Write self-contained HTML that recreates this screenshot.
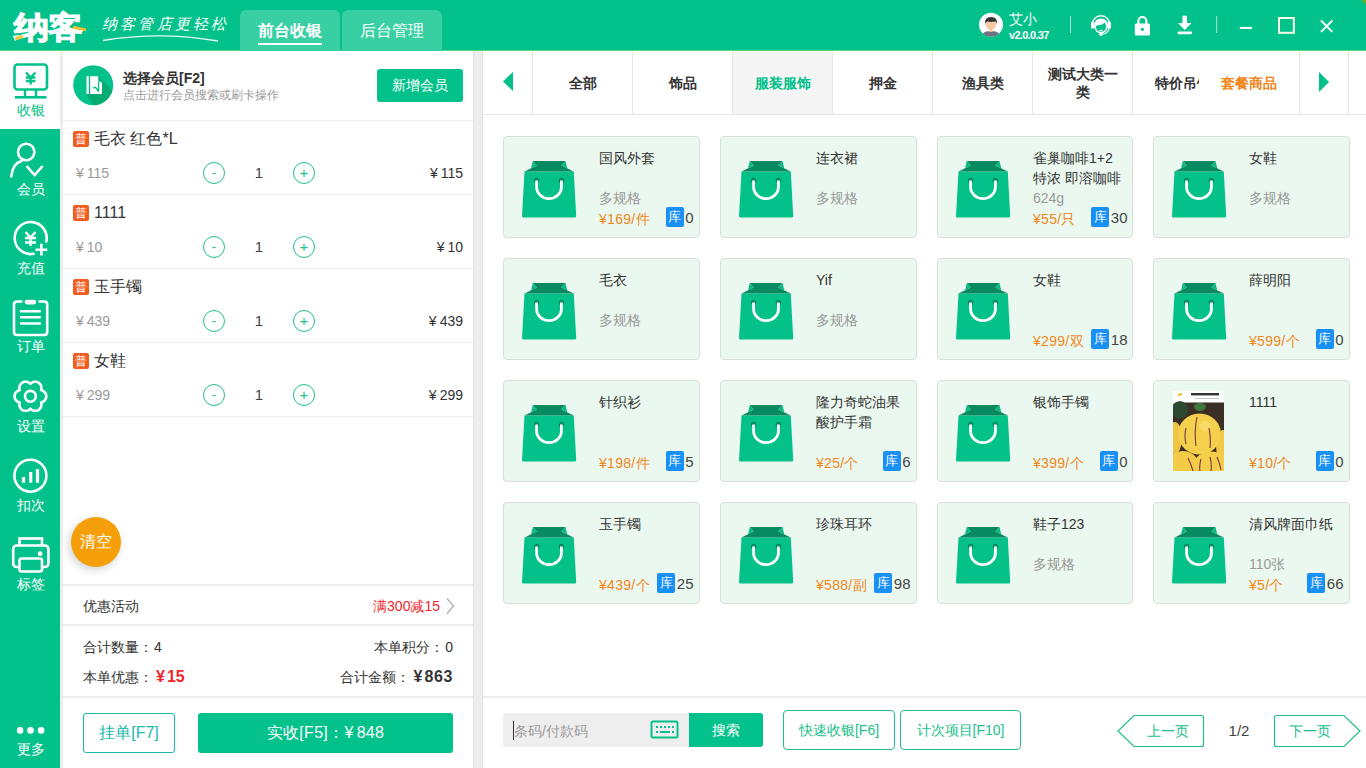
<!DOCTYPE html>
<html><head><meta charset="utf-8">
<style>
*{margin:0;padding:0;box-sizing:border-box}
html,body{width:1366px;height:768px;overflow:hidden;background:#ededed;font-family:"Liberation Sans",sans-serif;color:#333}
.a{position:absolute}
svg{position:absolute;overflow:visible}
</style></head><body>
<svg width="0" height="0" style="position:absolute">
<defs>
<g id="bag">
<path d="M2.5 11.6 L51.8 11.6 L54.2 56 Q54.3 57.6 52.6 57.6 L1.5 57.6 Q-0.1 57.6 0 56 Z" fill="#04c18a"/>
<path d="M10.8 0.9 L43.5 0.9 L39.3 5.5 L51.8 11.6 L2.5 11.6 L14.7 5.5 Z" fill="#078a5f"/>
<path d="M10.8 0.9 L14.7 5.5 L9 8.4 Z" fill="#0cb884"/>
<path d="M43.5 0.9 L39.3 5.5 L45.3 8.4 Z" fill="#0cb884"/>
<circle cx="14.6" cy="20.4" r="2.7" fill="#078a5f"/>
<circle cx="39.4" cy="20.4" r="2.7" fill="#078a5f"/>
<path d="M14.6 20.6 V27 A12.4 11.6 0 0 0 39.4 27 V20.6" fill="none" stroke="#fff" stroke-width="2.8"/>
</g>
</defs>
</svg>

<div class="a" style="left:0;top:0;width:1366px;height:51px;background:#02c18a"></div>
<div class="a" style="left:0;top:50px;width:1366px;height:1px;background:#58d880"></div>
<div class="a" style="left:14px;top:7px;height:40px;line-height:40px;font-size:35px;font-weight:900;color:#fff;letter-spacing:-1px;-webkit-text-stroke:1.2px #fff;transform:scaleY(0.88);transform-origin:0 50%">纳客</div>
<div class="a" style="left:15px;top:36px;width:8px;height:3px;background:#f3c230;transform:rotate(-20deg)"></div>
<div class="a" style="left:73px;top:27px;width:13px;height:3px;background:#f3c230;transform:rotate(12deg)"></div>
<div class="a" style="left:102px;top:12.5px;height:22px;line-height:22px;font-size:15px;color:#fff;letter-spacing:3.2px;font-weight:300;font-family:'Liberation Serif',serif;font-style:italic">纳客管店更轻松</div>
<svg style="left:0;top:0" width="1366" height="50"><path d="M103 40.5 Q160 31 218 41" fill="none" stroke="#fff" stroke-width="1.3" opacity="0.9"/></svg>
<div class="a" style="left:240px;top:10px;width:100px;height:41px;background:#38d0a2;border-radius:6px 6px 0 0"></div>
<div class="a" style="left:342px;top:10px;width:100px;height:41px;background:#38d0a2;border-radius:6px 6px 0 0"></div>
<div class="a" style="left:240.0px;top:19.0px;width:100px;height:24px;line-height:24px;font-size:16px;color:#fff;font-weight:bold;text-align:center;white-space:nowrap;">前台收银</div>
<div class="a" style="left:258px;top:43px;width:64px;height:2px;background:#fff"></div>
<div class="a" style="left:342.0px;top:19.0px;width:100px;height:24px;line-height:24px;font-size:16px;color:#fff;font-weight:normal;text-align:center;white-space:nowrap;">后台管理</div>
<svg style="left:0;top:0" width="1366" height="50">
<circle cx="991" cy="24.8" r="12" fill="#fff"/>
<clipPath id="av"><circle cx="991" cy="24.8" r="12"/></clipPath>
<g clip-path="url(#av)">
<path d="M983.5 33 Q985 31 991 31 Q997 31 998.5 33 L1004 40 H978 Z" fill="#6d7284"/>
<rect x="989.5" y="27" width="3" height="5" fill="#f1c39c"/>
<path d="M985.5 21.3 Q985.5 29.5 991 30 Q996.5 29.5 996.5 21.3 Z" fill="#f5c9a2"/>
<path d="M985 24.5 Q984 17 991 17 Q998 17 997 24.5 Q996.5 21.8 995.5 21.6 Q991 22.3 987 21.6 Q985.5 22 985 24.5 Z" fill="#333"/>
</g>
<line x1="1070.5" y1="16" x2="1070.5" y2="33" stroke="#a8e8cf" stroke-width="1"/>
<line x1="1216.7" y1="16" x2="1216.7" y2="33" stroke="#a8e8cf" stroke-width="1"/>
<!-- headset -->
<path d="M1092.3 24.5 A8.7 8.7 0 0 1 1109.7 24.5" fill="none" stroke="#fff" stroke-width="1.4"/>
<path d="M1094.2 27 Q1094 18.6 1101 18.6 Q1108 18.6 1108 27 L1106.3 28 Q1106.2 24.5 1104.6 22.5 Q1103 25 1097.5 25.3 Q1095.2 25.8 1095 28 Z" fill="#fff"/>
<rect x="1091" y="22" width="3.6" height="6.5" rx="1" fill="#fff"/>
<rect x="1107.4" y="22" width="3.6" height="6.5" rx="1" fill="#fff"/>
<path d="M1095.2 27 Q1095.8 32.6 1101 32.6 Q1106.2 32.6 1106.6 27" fill="none" stroke="#fff" stroke-width="1.5"/>
<path d="M1099.3 30.2 Q1101 30.9 1102.7 30.2" fill="none" stroke="#fff" stroke-width="1"/>
<path d="M1109.2 28 Q1108 34.2 1101.5 34.3" fill="none" stroke="#fff" stroke-width="1.3"/>
<circle cx="1100.8" cy="34.3" r="1.7" fill="#fff"/>
<!-- lock -->
<path d="M1138.4 24.5 V21 A4 4 0 0 1 1146.4 21 V24.5" fill="none" stroke="#fff" stroke-width="2.2"/>
<rect x="1134.8" y="23.5" width="15.2" height="12" rx="1.5" fill="#fff"/>
<circle cx="1142.4" cy="29.3" r="1.6" fill="#02c18a"/>
<!-- download -->
<path d="M1182.5 15.8 H1187 V23 H1191.5 L1184.8 30 L1178 23 H1182.5Z" fill="#fff"/>
<rect x="1177.6" y="31.5" width="14.5" height="2.7" rx="1.2" fill="#fff"/>
<!-- window controls -->
<rect x="1239.8" y="26.9" width="12.2" height="2" fill="#fff"/>
<rect x="1279" y="18" width="14.8" height="14.8" fill="none" stroke="#f7ffe6" stroke-width="2"/>
<path d="M1321 20.5 L1332.3 31.8 M1332.3 20.5 L1321 31.8" stroke="#fff" stroke-width="1.8"/>
</svg>
<svg style="left:1360px;top:0" width="6" height="6"><path d="M1.5 0 H6 V4.5 Z" fill="#78a820"/></svg>
<div class="a" style="left:1009px;top:9.5px;height:18px;line-height:18px;font-size:14px;color:#fff;font-weight:normal;white-space:nowrap;">艾小</div>
<div class="a" style="left:1009px;top:27.6px;height:14px;line-height:14px;font-size:11px;color:#fff;font-weight:bold;white-space:nowrap;letter-spacing:-0.7px">v2.0.0.37</div>
<div class="a" style="left:0;top:51px;width:61px;height:717px;background:#02c18a"></div>
<div class="a" style="left:0;top:51px;width:60px;height:78px;background:#fff"></div>
<div class="a" style="left:60px;top:51px;width:3px;height:717px;background:#ededed"></div>
<div class="a" style="left:0.5px;top:101.0px;width:60px;height:18px;line-height:18px;font-size:14px;color:#02c18a;font-weight:normal;text-align:center;white-space:nowrap;">收银</div>
<div class="a" style="left:0.5px;top:180.0px;width:60px;height:18px;line-height:18px;font-size:14px;color:#fff;font-weight:normal;text-align:center;white-space:nowrap;">会员</div>
<div class="a" style="left:0.5px;top:259.0px;width:60px;height:18px;line-height:18px;font-size:14px;color:#fff;font-weight:normal;text-align:center;white-space:nowrap;">充值</div>
<div class="a" style="left:0.5px;top:337.3px;width:60px;height:18px;line-height:18px;font-size:14px;color:#fff;font-weight:normal;text-align:center;white-space:nowrap;">订单</div>
<div class="a" style="left:0.5px;top:417.0px;width:60px;height:18px;line-height:18px;font-size:14px;color:#fff;font-weight:normal;text-align:center;white-space:nowrap;">设置</div>
<div class="a" style="left:0.5px;top:496.0px;width:60px;height:18px;line-height:18px;font-size:14px;color:#fff;font-weight:normal;text-align:center;white-space:nowrap;">扣次</div>
<div class="a" style="left:0.5px;top:575.0px;width:60px;height:18px;line-height:18px;font-size:14px;color:#fff;font-weight:normal;text-align:center;white-space:nowrap;">标签</div>
<div class="a" style="left:0.5px;top:740.0px;width:60px;height:18px;line-height:18px;font-size:14px;color:#fff;font-weight:normal;text-align:center;white-space:nowrap;">更多</div>
<svg style="left:0;top:0" width="61" height="768">
<!-- monitor -->
<rect x="14.5" y="64.5" width="32.5" height="25" rx="3" fill="none" stroke="#02c18a" stroke-width="2.6"/>
<rect x="23.8" y="89" width="2.4" height="8" fill="#02c18a"/>
<rect x="34.8" y="89" width="2.4" height="8" fill="#02c18a"/>
<rect x="15" y="96" width="31.5" height="2.6" fill="#02c18a"/>
<path d="M26 72.5 L30.7 77.5 L35.4 72.5 M26 77.5 H35.4 M26 81 H35.4 M30.7 77.5 V84.5" fill="none" stroke="#02c18a" stroke-width="2.3"/>
<g fill="none" stroke="#fff" stroke-width="2.6" stroke-linecap="round">
<!-- member -->
<circle cx="26.2" cy="152" r="8.2"/>
<path d="M11.3 176.5 Q12.5 163.5 21.5 161"/>
<path d="M26.6 166 L34.6 175 L42.6 166" stroke-linecap="butt"/>
<!-- recharge -->
<path d="M46.3 241.5 A16 16 0 1 0 33.5 253.8"/>
<path d="M35.5 249.7 H47.3 M41.4 243.8 V255.6" stroke-linecap="butt"/>
<path d="M25.5 232 L30.5 237.5 L35.5 232 M25 238 H36 M25 242.5 H36 M30.5 237.5 V246" stroke-width="2.3" stroke-linecap="butt"/>
<!-- order -->
<path d="M21.5 301.5 H17 Q14 301.5 14 304.5 V332 Q14 335 17 335 H44.2 Q47.2 335 47.2 332 V304.5 Q47.2 301.5 44.2 301.5 H39.7"/>
<path d="M21 311.2 H40 M21 317.3 H40 M21 323.5 H40" stroke-width="2.4"/>
<!-- settings gear -->
<path d="M46.3 396.3 L46.2 395.3 L45.9 394.3 L45.5 393.3 L44.9 392.4 L44.1 391.7 L43.2 391.0 L42.2 390.5 L41.1 390.1 L41.4 389.0 L41.4 387.9 L41.3 386.8 L41.0 385.7 L40.5 384.7 L39.9 383.9 L39.2 383.1 L38.4 382.5 L37.4 382.1 L36.4 381.8 L35.3 381.8 L34.3 381.8 L33.2 382.1 L32.2 382.5 L31.3 383.1 L30.4 383.9 L29.5 383.1 L28.6 382.5 L27.6 382.1 L26.5 381.8 L25.5 381.8 L24.4 381.8 L23.4 382.1 L22.5 382.5 L21.6 383.1 L20.9 383.9 L20.3 384.7 L19.8 385.7 L19.5 386.8 L19.4 387.9 L19.4 389.0 L19.7 390.1 L18.6 390.5 L17.6 391.0 L16.7 391.7 L15.9 392.4 L15.3 393.3 L14.9 394.3 L14.6 395.3 L14.5 396.3 L14.6 397.3 L14.9 398.3 L15.3 399.3 L15.9 400.2 L16.7 400.9 L17.6 401.6 L18.6 402.1 L19.7 402.5 L19.4 403.6 L19.4 404.7 L19.5 405.8 L19.8 406.9 L20.3 407.9 L20.9 408.7 L21.6 409.5 L22.4 410.1 L23.4 410.5 L24.4 410.8 L25.5 410.8 L26.5 410.8 L27.6 410.5 L28.6 410.1 L29.5 409.5 L30.4 408.7 L31.3 409.5 L32.2 410.1 L33.2 410.5 L34.3 410.8 L35.3 410.8 L36.4 410.8 L37.4 410.5 L38.4 410.1 L39.2 409.5 L39.9 408.7 L40.5 407.9 L41.0 406.9 L41.3 405.8 L41.4 404.7 L41.4 403.6 L41.1 402.5 L42.2 402.1 L43.2 401.6 L44.1 400.9 L44.9 400.2 L45.5 399.3 L45.9 398.3 L46.2 397.3Z" stroke-linejoin="round"/>
<circle cx="30.4" cy="396.3" r="5.4"/>
<!-- kouci -->
<circle cx="30.4" cy="475.7" r="16"/>
</g>
<rect x="24.6" y="299.7" width="11.6" height="4.8" rx="2.4" fill="#fff"/>
<rect x="21.9" y="477" width="3.2" height="5.7" fill="#fff"/>
<rect x="29.1" y="472" width="3.2" height="10.7" fill="#fff"/>
<rect x="35.9" y="469" width="3.2" height="13.7" fill="#fff"/>
<g fill="none" stroke="#fff" stroke-width="2.6">
<rect x="19.5" y="538.5" width="22.5" height="8"/>
<rect x="13.2" y="545.5" width="35.2" height="21.5" rx="3.5" fill="#02c18a"/>
<rect x="19.5" y="558.5" width="22.5" height="13" rx="2" fill="#02c18a"/>
</g>
<circle cx="40.1" cy="553.7" r="2.4" fill="#fff"/>
<circle cx="20.1" cy="730.4" r="3.3" fill="#fff"/>
<circle cx="30.5" cy="730.4" r="3.3" fill="#fff"/>
<circle cx="41.1" cy="730.4" r="3.3" fill="#fff"/>
</svg>
<div class="a" style="left:63px;top:51px;width:410px;height:717px;background:#fff"></div>
<div class="a" style="left:473px;top:51px;width:10px;height:717px;background:#ededed;border-left:1px solid #e2e2e2;border-right:1px solid #e2e2e2"></div>
<svg style="left:0;top:0" width="480" height="130">
<clipPath id="mc"><circle cx="93.2" cy="85.2" r="20"/></clipPath>
<circle cx="93.2" cy="85.2" r="20" fill="#02c18a"/>
<path d="M98 76.2 L126 104 L106 124 L86.5 94 Z" fill="#05ab70" clip-path="url(#mc)"/>
<rect x="86.5" y="76.2" width="2.4" height="17.8" rx="0.4" fill="#fff"/>
<path d="M90.2 76.2 H97.2 Q98.3 76.2 98.3 77.4 V81.2 L100.8 81.8 Q102 82.1 102 83.4 V94 H90.2 Z" fill="#fff"/>
<path d="M93.2 88.3 Q94.6 86.4 96.2 88.2 L98.6 91.3 V81.5" fill="none" stroke="#02c18a" stroke-width="1.4" stroke-linejoin="round"/>
</svg>
<div class="a" style="left:123px;top:69.0px;height:18px;line-height:18px;font-size:14px;color:#333;font-weight:bold;white-space:nowrap;">选择会员[F2]</div>
<div class="a" style="left:123px;top:87.3px;height:16px;line-height:16px;font-size:12px;color:#999;font-weight:normal;white-space:nowrap;">点击进行会员搜索或刷卡操作</div>
<div class="a" style="left:377px;top:69px;width:86px;height:33px;background:#02c18a;border-radius:3px;color:#fff;font-size:14px;text-align:center;line-height:33px">新增会员</div>
<div class="a" style="left:63px;top:120px;width:410px;height:1px;background:#eee"></div>
<div class="a" style="left:73px;top:131px;width:16px;height:16px;background:#f35b1f;border-radius:2px;color:#fff;font-size:12px;line-height:16px;text-align:center">普</div>
<div class="a" style="left:94px;top:129.0px;height:20px;line-height:20px;font-size:16px;color:#333;font-weight:normal;white-space:nowrap;">毛衣 红色*L</div>
<div class="a" style="left:76px;top:164.0px;height:18px;line-height:18px;font-size:14px;color:#999;font-weight:normal;white-space:nowrap;">¥<span style='margin-left:3px'>115</span></div>
<div class="a" style="left:203px;top:162px;width:22px;height:22px;border:1px solid #20bf8c;border-radius:50%;color:#20bf8c;font-size:13px;line-height:19px;text-align:center">-</div>
<div class="a" style="left:249.0px;top:163.5px;width:20px;height:18px;line-height:18px;font-size:15px;color:#444;font-weight:normal;text-align:center;white-space:nowrap;">1</div>
<div class="a" style="left:293px;top:162px;width:22px;height:22px;border:1px solid #20bf8c;border-radius:50%;color:#20bf8c;font-size:15px;line-height:20px;text-align:center">+</div>
<div class="a" style="right:903px;top:164.0px;height:18px;line-height:18px;font-size:14px;color:#333;font-weight:normal;white-space:nowrap;">¥<span style='margin-left:3px'>115</span></div>
<div class="a" style="left:63px;top:194px;width:410px;height:1px;background:#eee"></div>
<div class="a" style="left:73px;top:205px;width:16px;height:16px;background:#f35b1f;border-radius:2px;color:#fff;font-size:12px;line-height:16px;text-align:center">普</div>
<div class="a" style="left:94px;top:203.0px;height:20px;line-height:20px;font-size:16px;color:#333;font-weight:normal;white-space:nowrap;">1111</div>
<div class="a" style="left:76px;top:238.0px;height:18px;line-height:18px;font-size:14px;color:#999;font-weight:normal;white-space:nowrap;">¥<span style='margin-left:3px'>10</span></div>
<div class="a" style="left:203px;top:236px;width:22px;height:22px;border:1px solid #20bf8c;border-radius:50%;color:#20bf8c;font-size:13px;line-height:19px;text-align:center">-</div>
<div class="a" style="left:249.0px;top:237.5px;width:20px;height:18px;line-height:18px;font-size:15px;color:#444;font-weight:normal;text-align:center;white-space:nowrap;">1</div>
<div class="a" style="left:293px;top:236px;width:22px;height:22px;border:1px solid #20bf8c;border-radius:50%;color:#20bf8c;font-size:15px;line-height:20px;text-align:center">+</div>
<div class="a" style="right:903px;top:238.0px;height:18px;line-height:18px;font-size:14px;color:#333;font-weight:normal;white-space:nowrap;">¥<span style='margin-left:3px'>10</span></div>
<div class="a" style="left:63px;top:268px;width:410px;height:1px;background:#eee"></div>
<div class="a" style="left:73px;top:279px;width:16px;height:16px;background:#f35b1f;border-radius:2px;color:#fff;font-size:12px;line-height:16px;text-align:center">普</div>
<div class="a" style="left:94px;top:277.0px;height:20px;line-height:20px;font-size:16px;color:#333;font-weight:normal;white-space:nowrap;">玉手镯</div>
<div class="a" style="left:76px;top:312.0px;height:18px;line-height:18px;font-size:14px;color:#999;font-weight:normal;white-space:nowrap;">¥<span style='margin-left:3px'>439</span></div>
<div class="a" style="left:203px;top:310px;width:22px;height:22px;border:1px solid #20bf8c;border-radius:50%;color:#20bf8c;font-size:13px;line-height:19px;text-align:center">-</div>
<div class="a" style="left:249.0px;top:311.5px;width:20px;height:18px;line-height:18px;font-size:15px;color:#444;font-weight:normal;text-align:center;white-space:nowrap;">1</div>
<div class="a" style="left:293px;top:310px;width:22px;height:22px;border:1px solid #20bf8c;border-radius:50%;color:#20bf8c;font-size:15px;line-height:20px;text-align:center">+</div>
<div class="a" style="right:903px;top:312.0px;height:18px;line-height:18px;font-size:14px;color:#333;font-weight:normal;white-space:nowrap;">¥<span style='margin-left:3px'>439</span></div>
<div class="a" style="left:63px;top:342px;width:410px;height:1px;background:#eee"></div>
<div class="a" style="left:73px;top:353px;width:16px;height:16px;background:#f35b1f;border-radius:2px;color:#fff;font-size:12px;line-height:16px;text-align:center">普</div>
<div class="a" style="left:94px;top:351.0px;height:20px;line-height:20px;font-size:16px;color:#333;font-weight:normal;white-space:nowrap;">女鞋</div>
<div class="a" style="left:76px;top:386.0px;height:18px;line-height:18px;font-size:14px;color:#999;font-weight:normal;white-space:nowrap;">¥<span style='margin-left:3px'>299</span></div>
<div class="a" style="left:203px;top:384px;width:22px;height:22px;border:1px solid #20bf8c;border-radius:50%;color:#20bf8c;font-size:13px;line-height:19px;text-align:center">-</div>
<div class="a" style="left:249.0px;top:385.5px;width:20px;height:18px;line-height:18px;font-size:15px;color:#444;font-weight:normal;text-align:center;white-space:nowrap;">1</div>
<div class="a" style="left:293px;top:384px;width:22px;height:22px;border:1px solid #20bf8c;border-radius:50%;color:#20bf8c;font-size:15px;line-height:20px;text-align:center">+</div>
<div class="a" style="right:903px;top:386.0px;height:18px;line-height:18px;font-size:14px;color:#333;font-weight:normal;white-space:nowrap;">¥<span style='margin-left:3px'>299</span></div>
<div class="a" style="left:63px;top:416px;width:410px;height:1px;background:#eee"></div>
<div class="a" style="left:71px;top:517px;width:50px;height:50px;border-radius:50%;background:#f5a00b;box-shadow:-2px 3px 8px rgba(0,0,0,0.18);color:#fff;font-size:16px;line-height:50px;text-align:center">清空</div>
<div class="a" style="left:63px;top:584px;width:410px;height:2px;background:#ededed"></div>
<div class="a" style="left:83px;top:597.0px;height:18px;line-height:18px;font-size:14px;color:#333;font-weight:normal;white-space:nowrap;">优惠活动</div>
<div class="a" style="right:926px;top:597.0px;height:18px;line-height:18px;font-size:14px;color:#f0262c;font-weight:normal;white-space:nowrap;">满300减15</div>
<svg style="left:0;top:0" width="480" height="768"><path d="M447 598.5 L453.5 606 L447 613.5" fill="none" stroke="#aaa" stroke-width="1.2"/></svg>
<div class="a" style="left:63px;top:624px;width:410px;height:2px;background:#ededed"></div>
<div class="a" style="left:83px;top:638.0px;height:18px;line-height:18px;font-size:14px;color:#333;font-weight:normal;white-space:nowrap;">合计数量：<span style='margin-left:1px'>4</span></div>
<div class="a" style="right:913px;top:638.0px;height:18px;line-height:18px;font-size:14px;color:#333;font-weight:normal;white-space:nowrap;">本单积分：<span style='margin-left:1px'>0</span></div>
<div class="a" style="left:83px;top:668.0px;height:18px;line-height:18px;font-size:14px;color:#333;font-weight:normal;white-space:nowrap;">本单优惠：</div>
<div class="a" style="left:156px;top:667.0px;height:20px;line-height:20px;font-size:16px;color:#f0262c;font-weight:bold;white-space:nowrap;">¥<span style="margin-left:2px">15</span></div>
<div class="a" style="right:956px;top:668.0px;height:18px;line-height:18px;font-size:14px;color:#333;font-weight:normal;white-space:nowrap;">合计金额：</div>
<div class="a" style="right:913px;top:667.0px;height:20px;line-height:20px;font-size:16px;color:#333;font-weight:bold;white-space:nowrap;">¥<span style="margin-left:2px;letter-spacing:0.6px">863</span></div>
<div class="a" style="left:63px;top:696px;width:410px;height:2px;background:#ededed"></div>
<div class="a" style="left:83px;top:713px;width:92px;height:40px;border:1px solid #1ab8a8;border-radius:3px;color:#1ab8a8;font-size:16px;line-height:38px;text-align:center">挂单[F7]</div>
<div class="a" style="left:198px;top:713px;width:255px;height:40px;background:#02c18a;border-radius:3px;color:#fff;font-size:16px;line-height:40px;text-align:center;letter-spacing:0.3px">实收[F5]：¥<span style="margin-left:3px">848</span></div>
<div class="a" style="left:483px;top:51px;width:883px;height:717px;background:#fff"></div>
<div class="a" style="left:483px;top:114px;width:883px;height:1px;background:#e6e6e6"></div>
<div class="a" style="left:733px;top:51px;width:99px;height:63px;background:#f5f5f5"></div>
<div class="a" style="left:532px;top:51px;width:1px;height:63px;background:#e6e6e6"></div>
<div class="a" style="left:632px;top:51px;width:1px;height:63px;background:#e6e6e6"></div>
<div class="a" style="left:732px;top:51px;width:1px;height:63px;background:#e6e6e6"></div>
<div class="a" style="left:832px;top:51px;width:1px;height:63px;background:#e6e6e6"></div>
<div class="a" style="left:932px;top:51px;width:1px;height:63px;background:#e6e6e6"></div>
<div class="a" style="left:1032px;top:51px;width:1px;height:63px;background:#e6e6e6"></div>
<div class="a" style="left:1132px;top:51px;width:1px;height:63px;background:#e6e6e6"></div>
<div class="a" style="left:1299px;top:51px;width:1px;height:63px;background:#e6e6e6"></div>
<div class="a" style="left:1348px;top:51px;width:1px;height:63px;background:#e6e6e6"></div>
<div class="a" style="left:533.0px;top:73.0px;width:100px;height:20px;line-height:20px;font-size:14px;color:#333;font-weight:bold;text-align:center;white-space:nowrap;">全部</div>
<div class="a" style="left:633.0px;top:73.0px;width:100px;height:20px;line-height:20px;font-size:14px;color:#333;font-weight:bold;text-align:center;white-space:nowrap;">饰品</div>
<div class="a" style="left:733.0px;top:73.0px;width:100px;height:20px;line-height:20px;font-size:14px;color:#02c18a;font-weight:bold;text-align:center;white-space:nowrap;">服装服饰</div>
<div class="a" style="left:833.0px;top:73.0px;width:100px;height:20px;line-height:20px;font-size:14px;color:#333;font-weight:bold;text-align:center;white-space:nowrap;">押金</div>
<div class="a" style="left:933.0px;top:73.0px;width:100px;height:20px;line-height:20px;font-size:14px;color:#333;font-weight:bold;text-align:center;white-space:nowrap;">渔具类</div>
<div class="a" style="left:1033.0px;top:64.5px;width:100px;height:18px;line-height:18px;font-size:14px;color:#333;font-weight:bold;text-align:center;white-space:nowrap;">测试大类一</div>
<div class="a" style="left:1033.0px;top:82.5px;width:100px;height:18px;line-height:18px;font-size:14px;color:#333;font-weight:bold;text-align:center;white-space:nowrap;">类</div>
<div class="a" style="left:1155px;top:73px;width:44px;height:20px;overflow:hidden;line-height:20px;font-size:14px;font-weight:bold;color:#333;white-space:nowrap">特价吊饰</div>
<div class="a" style="left:1221px;top:73.0px;height:20px;line-height:20px;font-size:14px;color:#f0861a;font-weight:bold;white-space:nowrap;">套餐商品</div>
<svg style="left:0;top:0" width="1366" height="120"><path d="M513 72 L503 81.5 L513 91Z" fill="#02c18a"/><path d="M1319 72 L1329 82 L1319 92Z" fill="#02c18a"/></svg>
<div class="a" style="left:503px;top:136px;width:197px;height:102px;background:#ebf8ef;border:1px solid #d8dfda;border-radius:4px"></div>
<svg style="left:522px;top:160px" width="55" height="58"><use href="#bag"/></svg>
<div class="a" style="left:599px;top:148px;width:97px;line-height:20px;font-size:14px;color:#333;white-space:nowrap">国风外套</div>
<div class="a" style="left:599px;top:188.0px;height:20px;line-height:20px;font-size:14px;color:#999;font-weight:normal;white-space:nowrap;">多规格</div>
<div class="a" style="left:599px;top:208.5px;height:20px;line-height:20px;font-size:14px;color:#f0861a;font-weight:normal;white-space:nowrap;letter-spacing:0.3px">¥169/件</div>
<div class="a" style="right:672.5px;top:207.5px;height:20px;line-height:20px;font-size:15px;color:#444;font-weight:normal;white-space:nowrap;">0</div>
<div class="a" style="left:665.7px;top:207px;width:18px;height:20px;background:#1890f5;border-radius:2px;color:#fff;font-size:13px;line-height:20px;text-align:center">库</div>
<div class="a" style="left:720px;top:136px;width:197px;height:102px;background:#ebf8ef;border:1px solid #d8dfda;border-radius:4px"></div>
<svg style="left:739px;top:160px" width="55" height="58"><use href="#bag"/></svg>
<div class="a" style="left:816px;top:148px;width:97px;line-height:20px;font-size:14px;color:#333;white-space:nowrap">连衣裙</div>
<div class="a" style="left:816px;top:188.0px;height:20px;line-height:20px;font-size:14px;color:#999;font-weight:normal;white-space:nowrap;">多规格</div>
<div class="a" style="left:937px;top:136px;width:196px;height:102px;background:#ebf8ef;border:1px solid #d8dfda;border-radius:4px"></div>
<svg style="left:956px;top:160px" width="55" height="58"><use href="#bag"/></svg>
<div class="a" style="left:1033px;top:148px;width:96px;line-height:20px;font-size:14px;color:#333;white-space:nowrap">雀巢咖啡1+2<br>特浓 即溶咖啡<br><span style='color:#999'>624g</span></div>
<div class="a" style="left:1033px;top:208.5px;height:20px;line-height:20px;font-size:14px;color:#f0861a;font-weight:normal;white-space:nowrap;letter-spacing:0.3px">¥55/只</div>
<div class="a" style="right:238.5px;top:207.5px;height:20px;line-height:20px;font-size:15px;color:#444;font-weight:normal;white-space:nowrap;">30</div>
<div class="a" style="left:1091.4px;top:207px;width:18px;height:20px;background:#1890f5;border-radius:2px;color:#fff;font-size:13px;line-height:20px;text-align:center">库</div>
<div class="a" style="left:1153px;top:136px;width:197px;height:102px;background:#ebf8ef;border:1px solid #d8dfda;border-radius:4px"></div>
<svg style="left:1172px;top:160px" width="55" height="58"><use href="#bag"/></svg>
<div class="a" style="left:1249px;top:148px;width:97px;line-height:20px;font-size:14px;color:#333;white-space:nowrap">女鞋</div>
<div class="a" style="left:1249px;top:188.0px;height:20px;line-height:20px;font-size:14px;color:#999;font-weight:normal;white-space:nowrap;">多规格</div>
<div class="a" style="left:503px;top:258px;width:197px;height:102px;background:#ebf8ef;border:1px solid #d8dfda;border-radius:4px"></div>
<svg style="left:522px;top:282px" width="55" height="58"><use href="#bag"/></svg>
<div class="a" style="left:599px;top:270px;width:97px;line-height:20px;font-size:14px;color:#333;white-space:nowrap">毛衣</div>
<div class="a" style="left:599px;top:310.0px;height:20px;line-height:20px;font-size:14px;color:#999;font-weight:normal;white-space:nowrap;">多规格</div>
<div class="a" style="left:720px;top:258px;width:197px;height:102px;background:#ebf8ef;border:1px solid #d8dfda;border-radius:4px"></div>
<svg style="left:739px;top:282px" width="55" height="58"><use href="#bag"/></svg>
<div class="a" style="left:816px;top:270px;width:97px;line-height:20px;font-size:14px;color:#333;white-space:nowrap">Yif</div>
<div class="a" style="left:816px;top:310.0px;height:20px;line-height:20px;font-size:14px;color:#999;font-weight:normal;white-space:nowrap;">多规格</div>
<div class="a" style="left:937px;top:258px;width:196px;height:102px;background:#ebf8ef;border:1px solid #d8dfda;border-radius:4px"></div>
<svg style="left:956px;top:282px" width="55" height="58"><use href="#bag"/></svg>
<div class="a" style="left:1033px;top:270px;width:96px;line-height:20px;font-size:14px;color:#333;white-space:nowrap">女鞋</div>
<div class="a" style="left:1033px;top:330.5px;height:20px;line-height:20px;font-size:14px;color:#f0861a;font-weight:normal;white-space:nowrap;letter-spacing:0.3px">¥299/双</div>
<div class="a" style="right:238.5px;top:329.5px;height:20px;line-height:20px;font-size:15px;color:#444;font-weight:normal;white-space:nowrap;">18</div>
<div class="a" style="left:1091.4px;top:329px;width:18px;height:20px;background:#1890f5;border-radius:2px;color:#fff;font-size:13px;line-height:20px;text-align:center">库</div>
<div class="a" style="left:1153px;top:258px;width:197px;height:102px;background:#ebf8ef;border:1px solid #d8dfda;border-radius:4px"></div>
<svg style="left:1172px;top:282px" width="55" height="58"><use href="#bag"/></svg>
<div class="a" style="left:1249px;top:270px;width:97px;line-height:20px;font-size:14px;color:#333;white-space:nowrap">薛明阳</div>
<div class="a" style="left:1249px;top:330.5px;height:20px;line-height:20px;font-size:14px;color:#f0861a;font-weight:normal;white-space:nowrap;letter-spacing:0.3px">¥599/个</div>
<div class="a" style="right:22.5px;top:329.5px;height:20px;line-height:20px;font-size:15px;color:#444;font-weight:normal;white-space:nowrap;">0</div>
<div class="a" style="left:1315.7px;top:329px;width:18px;height:20px;background:#1890f5;border-radius:2px;color:#fff;font-size:13px;line-height:20px;text-align:center">库</div>
<div class="a" style="left:503px;top:380px;width:197px;height:102px;background:#ebf8ef;border:1px solid #d8dfda;border-radius:4px"></div>
<svg style="left:522px;top:404px" width="55" height="58"><use href="#bag"/></svg>
<div class="a" style="left:599px;top:392px;width:97px;line-height:20px;font-size:14px;color:#333;white-space:nowrap">针织衫</div>
<div class="a" style="left:599px;top:452.5px;height:20px;line-height:20px;font-size:14px;color:#f0861a;font-weight:normal;white-space:nowrap;letter-spacing:0.3px">¥198/件</div>
<div class="a" style="right:672.5px;top:451.5px;height:20px;line-height:20px;font-size:15px;color:#444;font-weight:normal;white-space:nowrap;">5</div>
<div class="a" style="left:665.7px;top:451px;width:18px;height:20px;background:#1890f5;border-radius:2px;color:#fff;font-size:13px;line-height:20px;text-align:center">库</div>
<div class="a" style="left:720px;top:380px;width:197px;height:102px;background:#ebf8ef;border:1px solid #d8dfda;border-radius:4px"></div>
<svg style="left:739px;top:404px" width="55" height="58"><use href="#bag"/></svg>
<div class="a" style="left:816px;top:392px;width:97px;line-height:20px;font-size:14px;color:#333;white-space:nowrap">隆力奇蛇油果<br>酸护手霜</div>
<div class="a" style="left:816px;top:452.5px;height:20px;line-height:20px;font-size:14px;color:#f0861a;font-weight:normal;white-space:nowrap;letter-spacing:0.3px">¥25/个</div>
<div class="a" style="right:455.5px;top:451.5px;height:20px;line-height:20px;font-size:15px;color:#444;font-weight:normal;white-space:nowrap;">6</div>
<div class="a" style="left:882.7px;top:451px;width:18px;height:20px;background:#1890f5;border-radius:2px;color:#fff;font-size:13px;line-height:20px;text-align:center">库</div>
<div class="a" style="left:937px;top:380px;width:196px;height:102px;background:#ebf8ef;border:1px solid #d8dfda;border-radius:4px"></div>
<svg style="left:956px;top:404px" width="55" height="58"><use href="#bag"/></svg>
<div class="a" style="left:1033px;top:392px;width:96px;line-height:20px;font-size:14px;color:#333;white-space:nowrap">银饰手镯</div>
<div class="a" style="left:1033px;top:452.5px;height:20px;line-height:20px;font-size:14px;color:#f0861a;font-weight:normal;white-space:nowrap;letter-spacing:0.3px">¥399/个</div>
<div class="a" style="right:238.5px;top:451.5px;height:20px;line-height:20px;font-size:15px;color:#444;font-weight:normal;white-space:nowrap;">0</div>
<div class="a" style="left:1099.7px;top:451px;width:18px;height:20px;background:#1890f5;border-radius:2px;color:#fff;font-size:13px;line-height:20px;text-align:center">库</div>
<div class="a" style="left:1153px;top:380px;width:197px;height:102px;background:#ebf8ef;border:1px solid #d8dfda;border-radius:4px"></div>
<svg style="left:1153px;top:380px" width="197" height="102">
<clipPath id="fr"><rect x="20" y="11" width="51" height="80"/></clipPath>
<g clip-path="url(#fr)">
<rect x="20" y="11" width="51" height="80" fill="#fff"/>
<path d="M20 26 Q20 22.5 24 22.5 H71 V91 H20 Z" fill="#3b2e22"/>
<ellipse cx="27" cy="30" rx="8" ry="9" fill="#2d4a30"/>
<ellipse cx="47" cy="27" rx="6" ry="4" fill="#3f7a3c"/>
<ellipse cx="22" cy="58" rx="7" ry="16" fill="#efc445"/>
<ellipse cx="70" cy="66" rx="7" ry="16" fill="#f1c848"/>
<ellipse cx="46.5" cy="54" rx="21.5" ry="20.5" fill="#f5d04c"/>
<ellipse cx="30" cy="84" rx="15" ry="13" fill="#f3cb47"/>
<ellipse cx="58" cy="84.5" rx="17" ry="13" fill="#f4cd49"/>
<ellipse cx="52" cy="46" rx="6" ry="5" fill="#fbe27a" opacity="0.6"/>
<path d="M44 37 Q41 50 43 66 M33 48 Q31 56 33 64 M56 48 Q58 58 57 68 M35 78 Q38 84 40 91 M48 79 Q46 86 47 91 M57 77 Q59 84 58 91 M64 77 Q67 84 68 90" stroke="#7a3448" stroke-width="1.1" fill="none"/>
<ellipse cx="27" cy="14.5" rx="2.2" ry="1.3" fill="#f0c030" transform="rotate(-25 27 14.5)"/>
<rect x="38" y="13" width="28" height="2.4" fill="#333"/>
<rect x="42" y="18" width="24" height="0.8" fill="#bbb"/>
</g></svg>
<div class="a" style="left:1249px;top:392px;width:97px;line-height:20px;font-size:14px;color:#333;white-space:nowrap">1111</div>
<div class="a" style="left:1249px;top:452.5px;height:20px;line-height:20px;font-size:14px;color:#f0861a;font-weight:normal;white-space:nowrap;letter-spacing:0.3px">¥10/个</div>
<div class="a" style="right:22.5px;top:451.5px;height:20px;line-height:20px;font-size:15px;color:#444;font-weight:normal;white-space:nowrap;">0</div>
<div class="a" style="left:1315.7px;top:451px;width:18px;height:20px;background:#1890f5;border-radius:2px;color:#fff;font-size:13px;line-height:20px;text-align:center">库</div>
<div class="a" style="left:503px;top:502px;width:197px;height:102px;background:#ebf8ef;border:1px solid #d8dfda;border-radius:4px"></div>
<svg style="left:522px;top:526px" width="55" height="58"><use href="#bag"/></svg>
<div class="a" style="left:599px;top:514px;width:97px;line-height:20px;font-size:14px;color:#333;white-space:nowrap">玉手镯</div>
<div class="a" style="left:599px;top:574.5px;height:20px;line-height:20px;font-size:14px;color:#f0861a;font-weight:normal;white-space:nowrap;letter-spacing:0.3px">¥439/个</div>
<div class="a" style="right:672.5px;top:573.5px;height:20px;line-height:20px;font-size:15px;color:#444;font-weight:normal;white-space:nowrap;">25</div>
<div class="a" style="left:657.4px;top:573px;width:18px;height:20px;background:#1890f5;border-radius:2px;color:#fff;font-size:13px;line-height:20px;text-align:center">库</div>
<div class="a" style="left:720px;top:502px;width:197px;height:102px;background:#ebf8ef;border:1px solid #d8dfda;border-radius:4px"></div>
<svg style="left:739px;top:526px" width="55" height="58"><use href="#bag"/></svg>
<div class="a" style="left:816px;top:514px;width:97px;line-height:20px;font-size:14px;color:#333;white-space:nowrap">珍珠耳环</div>
<div class="a" style="left:816px;top:574.5px;height:20px;line-height:20px;font-size:14px;color:#f0861a;font-weight:normal;white-space:nowrap;letter-spacing:0.3px">¥588/副</div>
<div class="a" style="right:455.5px;top:573.5px;height:20px;line-height:20px;font-size:15px;color:#444;font-weight:normal;white-space:nowrap;">98</div>
<div class="a" style="left:874.4px;top:573px;width:18px;height:20px;background:#1890f5;border-radius:2px;color:#fff;font-size:13px;line-height:20px;text-align:center">库</div>
<div class="a" style="left:937px;top:502px;width:196px;height:102px;background:#ebf8ef;border:1px solid #d8dfda;border-radius:4px"></div>
<svg style="left:956px;top:526px" width="55" height="58"><use href="#bag"/></svg>
<div class="a" style="left:1033px;top:514px;width:96px;line-height:20px;font-size:14px;color:#333;white-space:nowrap">鞋子123</div>
<div class="a" style="left:1033px;top:554.0px;height:20px;line-height:20px;font-size:14px;color:#999;font-weight:normal;white-space:nowrap;">多规格</div>
<div class="a" style="left:1153px;top:502px;width:197px;height:102px;background:#ebf8ef;border:1px solid #d8dfda;border-radius:4px"></div>
<svg style="left:1172px;top:526px" width="55" height="58"><use href="#bag"/></svg>
<div class="a" style="left:1249px;top:514px;width:97px;line-height:20px;font-size:14px;color:#333;white-space:nowrap">清风牌面巾纸</div>
<div class="a" style="left:1249px;top:554.0px;height:20px;line-height:20px;font-size:14px;color:#999;font-weight:normal;white-space:nowrap;">110张</div>
<div class="a" style="left:1249px;top:574.5px;height:20px;line-height:20px;font-size:14px;color:#f0861a;font-weight:normal;white-space:nowrap;letter-spacing:0.3px">¥5/个</div>
<div class="a" style="right:22.5px;top:573.5px;height:20px;line-height:20px;font-size:15px;color:#444;font-weight:normal;white-space:nowrap;">66</div>
<div class="a" style="left:1307.4px;top:573px;width:18px;height:20px;background:#1890f5;border-radius:2px;color:#fff;font-size:13px;line-height:20px;text-align:center">库</div>
<div class="a" style="left:483px;top:696px;width:883px;height:2px;background:#ededed"></div>
<div class="a" style="left:503px;top:713px;width:186px;height:34px;background:#eeeeee;border-radius:3px 0 0 3px"></div>
<div class="a" style="left:513px;top:721px;width:1px;height:19px;background:#333"></div>
<div class="a" style="left:514px;top:721.5px;height:18px;line-height:18px;font-size:14px;color:#999;font-weight:normal;white-space:nowrap;">条码/付款码</div>
<svg style="left:0;top:0" width="1366" height="768">
<rect x="651.5" y="721.5" width="26" height="16" rx="1.5" fill="none" stroke="#02c18a" stroke-width="2"/>
<g fill="#02c18a"><rect x="656" y="726" width="2" height="2"/><rect x="660" y="726" width="2" height="2"/><rect x="664" y="726" width="2" height="2"/><rect x="668" y="726" width="2" height="2"/><rect x="672" y="726" width="2" height="2"/>
<rect x="656" y="731" width="2" height="2"/><rect x="660" y="731" width="10" height="2"/><rect x="672" y="731" width="2" height="2"/></g>
<path d="M1134 715.5 H1201.5 Q1203.5 715.5 1203.5 717.5 V744.5 Q1203.5 746.5 1201.5 746.5 H1134 L1118 731 Z" fill="none" stroke="#20bf8c" stroke-width="1.2"/>
<path d="M1344 715.5 H1276.5 Q1274.5 715.5 1274.5 717.5 V744.5 Q1274.5 746.5 1276.5 746.5 H1344 L1360 731 Z" fill="none" stroke="#20bf8c" stroke-width="1.2"/>
</svg>
<div class="a" style="left:689px;top:713px;width:74px;height:34px;background:#02c18a;border-radius:0 3px 3px 0;color:#fff;font-size:14px;font-weight:500;line-height:34px;text-align:center">搜索</div>
<div class="a" style="left:783px;top:710px;width:112px;height:40px;border:1px solid #20bf8c;border-radius:4px;color:#20bf8c;font-size:14px;line-height:38px;text-align:center">快速收银[F6]</div>
<div class="a" style="left:900px;top:710px;width:121px;height:40px;border:1px solid #20bf8c;border-radius:4px;color:#20bf8c;font-size:14px;line-height:38px;text-align:center">计次项目[F10]</div>
<div class="a" style="left:1128.0px;top:722.0px;width:80px;height:18px;line-height:18px;font-size:14px;color:#20bf8c;font-weight:normal;text-align:center;white-space:nowrap;">上一页</div>
<div class="a" style="left:1219.0px;top:722.0px;width:40px;height:18px;line-height:18px;font-size:15px;color:#444;font-weight:normal;text-align:center;white-space:nowrap;">1/2</div>
<div class="a" style="left:1270.0px;top:722.0px;width:80px;height:18px;line-height:18px;font-size:14px;color:#20bf8c;font-weight:normal;text-align:center;white-space:nowrap;">下一页</div>
</body></html>
